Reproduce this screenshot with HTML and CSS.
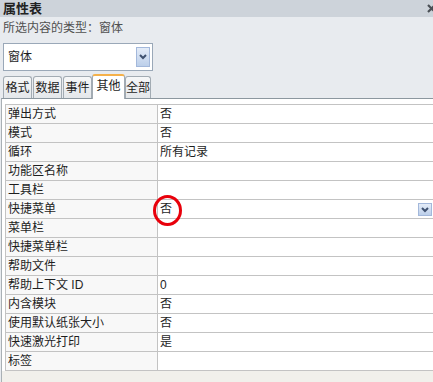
FILE: index.html
```html
<!DOCTYPE html>
<html>
	<head>
		<meta charset="utf-8">
		<title>属性表</title>
		<link rel="stylesheet" href="styles.css">
	</head>
	<body>
		<div class="titlebar">
			<span class="title">属性表</span>
			<svg class="close" width="10" height="10" viewBox="0 0 10 10">
				<path d="M1 1 L8 8 M8 1 L1 8" stroke="#4a4f55" stroke-width="2.2"/>
			</svg>
		</div>
		<div class="subtitle">所选内容的类型：窗体</div>

		<div class="combo">
			<span class="combo-text">窗体</span>
			<span class="combo-btn">
				<svg width="8" height="6" viewBox="0 0 8 6"><path d="M1 1 L4 4 L7 1" fill="none" stroke="#3f5170" stroke-width="2"/></svg>
			</span>
		</div>

		<div class="tabs">
			<div class="tab t1">格式</div>
			<div class="tab t2">数据</div>
			<div class="tab t3">事件</div>
			<div class="tab active t4">其他</div>
			<div class="tab t5">全部</div>
		</div>

		<div class="panel">
			<table class="props">
				<tr><td class="lbl">弹出方式</td><td class="val">否</td></tr>
				<tr><td class="lbl">模式</td><td class="val">否</td></tr>
				<tr><td class="lbl">循环</td><td class="val">所有记录</td></tr>
				<tr><td class="lbl">功能区名称</td><td class="val"></td></tr>
				<tr><td class="lbl">工具栏</td><td class="val"></td></tr>
				<tr>
					<td class="lbl">快捷菜单</td>
					<td class="val marked">否<span class="ring"></span>
						<span class="row-btn">
							<svg width="8" height="6" viewBox="0 0 8 6"><path d="M1 1 L4 4 L7 1" fill="none" stroke="#3f5170" stroke-width="2"/></svg>
						</span>
					</td>
				</tr>
				<tr><td class="lbl">菜单栏</td><td class="val"></td></tr>
				<tr><td class="lbl">快捷菜单栏</td><td class="val"></td></tr>
				<tr><td class="lbl">帮助文件</td><td class="val"></td></tr>
				<tr><td class="lbl">帮助上下文 ID</td><td class="val">0</td></tr>
				<tr><td class="lbl">内含模块</td><td class="val">否</td></tr>
				<tr><td class="lbl">使用默认纸张大小</td><td class="val">否</td></tr>
				<tr><td class="lbl">快速激光打印</td><td class="val">是</td></tr>
				<tr><td class="lbl">标签</td><td class="val"></td></tr>
			</table>
		</div>
	</body>
</html>
```

FILE: styles.css
```css
body {
	margin: 0;
	background-color: #e8ebef;
	font-family: "Liberation Sans", "Noto Sans CJK SC", sans-serif;
	font-size: 12px;
	color: #1e1e1e;
	overflow: hidden;
}

.titlebar {
	height: 17px;
	background-color: #cdd3da;
	display: flex;
	align-items: center;
	justify-content: space-between;
	padding-left: 3px;
}
.title {
	font-weight: bold;
	font-size: 13px;
	line-height: 17px;
	color: #222;
}
.close {
	margin-right: -4px;
}

.subtitle {
	padding: 3px 0 0 3px;
	height: 19px;
	line-height: 17px;
	color: #505050;
}

.combo {
	margin: 4px 0 0 3px;
	width: 148px;
	height: 26px;
	border: 1px solid #9aa8b8;
	background-color: white;
	display: flex;
	align-items: center;
	justify-content: space-between;
}
.combo-text {
	padding-left: 4px;
	line-height: 16px;
}
.combo-btn, .row-btn {
	width: 12px;
	border: 1px solid #a3b8db;
	background: linear-gradient(#e4ecf8, #bccfea);
	display: flex;
	align-items: center;
	justify-content: center;
}
.combo-btn {
	height: 18px;
	margin-right: 2px;
}

.tabs {
	display: flex;
	align-items: flex-end;
	margin: 3px 0 0 3px;
	height: 24px;
}
.tab {
	box-sizing: border-box;
	height: 22px;
	border: 1px solid #a2abb3;
	border-bottom: none;
	border-radius: 3px 3px 0 0;
	background: linear-gradient(#f6f7f8, #e4e7ea);
	text-align: center;
	line-height: 22px;
	font-size: 12px;
}
.t1 { width: 29px; margin-right: 1px; }
.t2 { width: 29px; margin-right: 1px; }
.t3 { width: 29px; }
.t4 { width: 33px; }
.t5 { width: 26px; }
.tab.active {
	height: 25px;
	margin-bottom: -1px;
	position: relative;
	background: white;
	border-top: 2px solid #f5b14a;
	line-height: 21px;
}

.panel {
	margin-left: 1px;
	border-top: 1px solid #8c979f;
	border-left: 1px solid #a9b0b5;
	padding: 5px 0 0 3px;
	height: 278px;
	background: linear-gradient(white 272px, #f1f0eb 272px);
}

.props {
	border-collapse: collapse;
	width: 440px;
}
.props td {
	border: 1px solid #c3c3c3;
	height: 17px;
	padding: 1px 2px 0;
	line-height: 17px;
	white-space: nowrap;
}
.props td.lbl {
	width: 147px;
	background-color: #f8f8f8;
}
.props td.val {
	background-color: white;
}
.marked {
	position: relative;
}
.ring {
	position: absolute;
	left: -5px;
	top: -5px;
	width: 23px;
	height: 25px;
	border: 3px solid #e8000b;
	border-radius: 50%;
}
.row-btn {
	position: absolute;
	left: 260px;
	top: 3px;
	height: 11px;
}
```
